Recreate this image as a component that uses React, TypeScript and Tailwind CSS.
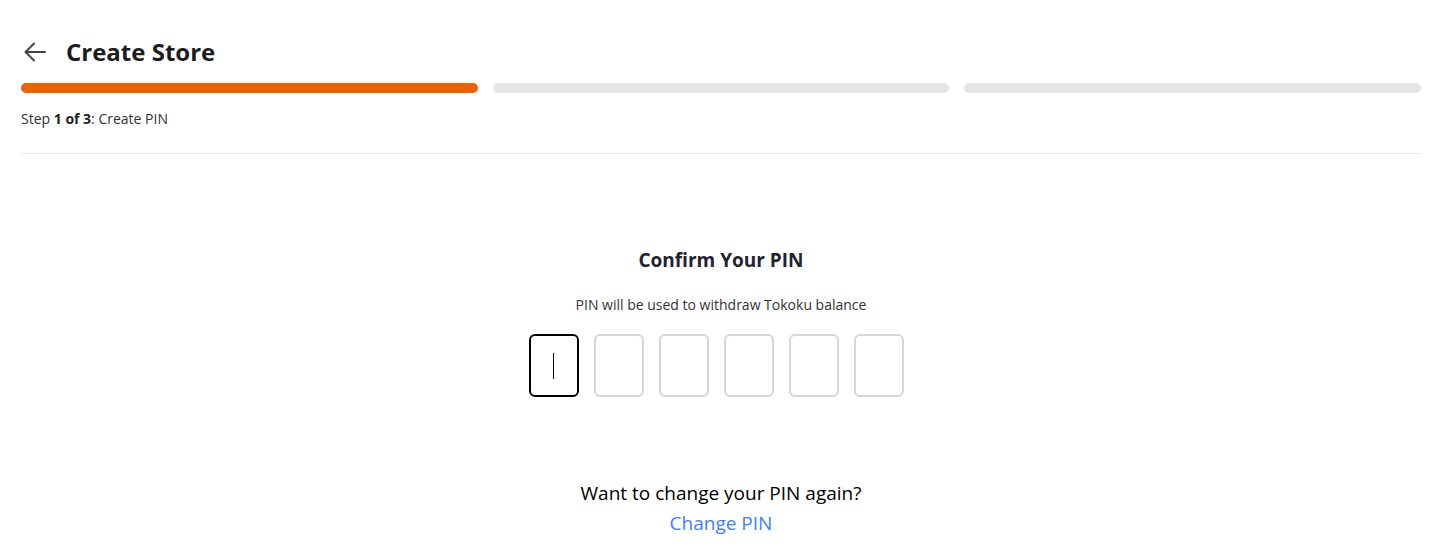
import React, { useState } from 'react';

export default function App() {
  const [step] = useState(1);
  const pins = [0, 1, 2, 3, 4, 5];

  return (
    <div className="w-full h-[557px] overflow-hidden bg-white pl-[21px] pr-[19px] text-[#222]" style={{ fontFamily: '"Open Sans", "Noto Sans", sans-serif' }}>
      {/* Header */}
      <div className="flex items-center h-8 mt-9">
        <button className="flex items-center justify-center w-[26px] h-8 ml-px text-[#444]" aria-label="Back">
          <svg width="24" height="20" viewBox="0 0 24 20" fill="none" stroke="currentColor" strokeWidth="2" strokeLinecap="round" strokeLinejoin="round">
            <path d="M22 10H3" />
            <path d="M11 1.5 2.5 10 11 18.5" />
          </svg>
        </button>
        <h1 className="ml-[18px] text-[24px] font-bold leading-8 text-[#1c1c1c]">Create Store</h1>
      </div>

      {/* Progress */}
      <div className="grid grid-cols-3 gap-[15px] mt-[15px]">
        {[1, 2, 3].map((s) => (
          <div key={s} className={`h-[10px] rounded-full ${s <= step ? 'bg-[#ee6200]' : 'bg-[#e5e5e5]'}`} />
        ))}
      </div>
      <p className="mt-4 text-[14px] leading-5 text-[#333]">
        Step <span className="font-bold text-[#222]">1 of 3</span>: Create PIN
      </p>
      <div className="mt-6 border-t border-[#e8e8e8]" />

      {/* PIN */}
      <div className="flex flex-col items-center mt-[92px]">
        <h2 className="text-[19px] font-bold leading-7 text-[#1f2330]">Confirm Your PIN</h2>
        <p className="mt-[21px] text-[14px] leading-5 text-[#333]">PIN will be used to withdraw Tokoku balance</p>
        <div className="flex gap-[15px] mt-[19px] mr-[10px]">
          {pins.map((i) => (
            <div
              key={i}
              className={`w-[50px] h-[63px] rounded-[6px] border-2 flex items-center justify-center ${
                i === 0 ? 'border-black' : 'border-[#d6d6d6]'
              }`}
            >
              {i === 0 && <div className="w-px h-[26px] bg-black" />}
            </div>
          ))}
        </div>
        <p className="mt-[81px] text-[19px] leading-[30px] text-black">Want to change your PIN again?</p>
        <button className="text-[19px] leading-[30px] text-[#3b82f6]">Change PIN</button>
      </div>
    </div>
  );
}
